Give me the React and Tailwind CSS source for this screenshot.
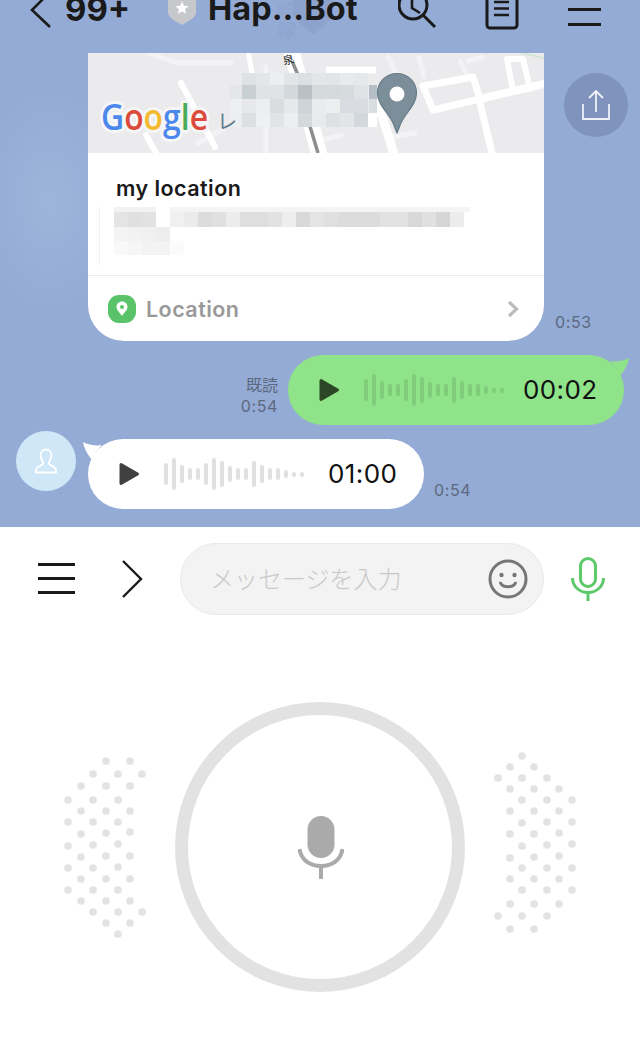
const mapRows = [
  { y: 20, h: 12, cells: [[154,"#dfe2e4"],[168,"#e4e7e9"],[182,"#eceef0"],[196,"#e2e5e7"],[210,"#dde0e3"],[224,"#e4e6e8"],[238,"#e2e5e7"],[252,"#e8eaec"],[266,"#e6e8ea"]] },
  { y: 32, h: 14, cells: [[142,"#e4e6e8"],[154,"#c9d0d4"],[168,"#dfe3e6"],[182,"#dfe3e6"],[196,"#d3d8dc"],[210,"#b9c0c6"],[224,"#d4d9dc"],[238,"#d4d9dc"],[252,"#d6dbde"],[266,"#e0e3e6"],[281,"#b6bfc5",8]] },
  { y: 46, h: 14, cells: [[142,"#eeeff0"],[154,"#e6e8ea"],[168,"#eceef0"],[182,"#d9dde0"],[196,"#e6e8ea"],[210,"#ced4d8"],[224,"#e9ebed"],[238,"#eceef0"],[252,"#d9dde1"],[266,"#d9dde1"],[281,"#d8dde0",8]] },
  { y: 60, h: 14, cells: [[142,"#ebedee"],[154,"#dde0e3"],[168,"#eef0f1"],[182,"#e0e4e6"],[196,"#eceef0"],[210,"#d4d9dc"],[224,"#e8eaec"],[238,"#dde1e4"],[252,"#e2e5e7"],[266,"#d3d8dc"],[280,"#ffffff",9]] },
];
const addrRow = ["#e4e4e4","#e0e0e0","#e2e2e2","#ffffff","#f0f0f0","#ebebeb","#dcdcdc","#e0e0e0","#ececec","#dedede","#dedede","#e2e2e2","#eeeeee","#d8d8d8","#e4e4e4","#e0e0e0","#dcdcdc","#dcdcdc","#dcdcdc","#e2e2e2","#e2e2e2","#d8d8d8","#e0e0e0","#d6d6d6","#ececec"];
const leftDots = [[168,63],[240,63],[129,102],[204,102],[276,102],[93,138],[168,138],[240,138],[54,180],[129,180],[204,180],[93,213],[168,213],[240,213],[54,246],[129,246],[204,246],[93,282],[168,279],[240,276],[54,318],[129,315],[204,312],[93,351],[168,348],[240,348],[54,384],[129,384],[204,381],[93,417],[168,417],[240,417],[54,450],[129,450],[204,450],[93,483],[168,483],[240,483],[129,516],[204,516],[276,516],[168,549],[240,549],[204,582]];
const rightDots = [[126,48],[90,81],[162,81],[54,114],[126,114],[201,114],[90,147],[162,147],[237,147],[126,180],[201,180],[276,180],[90,213],[162,213],[237,213],[126,249],[201,246],[276,246],[90,282],[162,282],[237,279],[126,318],[201,315],[276,312],[90,354],[162,351],[237,348],[126,384],[201,384],[276,384],[90,417],[162,417],[237,417],[126,450],[201,450],[276,450],[90,492],[162,492],[237,492],[54,528],[126,528],[201,528],[90,567],[162,567]];
const wave = [22,32,18,12,12,22,32,26,16,12,12,26,18,12,12,8,5,5];

function Dots({ dots }) {
  return (
    <svg width="110" height="210" viewBox="0 0 330 630" className="mt-[38px] shrink-0">
      {dots.map(([x, y], i) => <circle key={i} cx={x} cy={y} r="11.5" fill="#e3e3e3" />)}
    </svg>
  );
}

function MapPic() {
  return (
    <svg width="456" height="100" viewBox="0 0 456 100" className="block">
      <rect width="456" height="100" fill="#ebebed" />
      <g fill="none" strokeLinecap="round" strokeLinejoin="round">
        <g stroke="#f3f3f5" strokeWidth="5">
          <path d="M60 0L90 10H143" />
          <path d="M300 4L310 24" /><path d="M331 4L336 24" /><path d="M372 8L380 24" /><path d="M380 8L395 4" />
          <path d="M304 84L327 80" /><path d="M234 87L254 82" /><path d="M178 14V100" />
          <path d="M110 90L135 76" />
        </g>
        <g stroke="#ffffff" strokeWidth="6">
          <path d="M93 30L127 94" /><path d="M58 82L68 100" />
        </g>
        <path d="M203 -4L232 104" stroke="#ffffff" strokeWidth="16" strokeLinecap="butt" />
        <path d="M160 -2L164 20" stroke="#ffffff" strokeWidth="5" />
        <path d="M204 8L210 22M221 70L230 100" stroke="#8e8e8e" strokeWidth="3.5" strokeLinecap="butt" />
        <path d="M238 17H288" stroke="#ffffff" strokeWidth="7" strokeLinecap="butt" />
        <path d="M290 50L307 104" stroke="#ffffff" strokeWidth="9" />
        <path d="M335 33L385 24L392 46L345 57Z" stroke="#ffffff" strokeWidth="7" />
        <path d="M392 46L460 30" stroke="#ffffff" strokeWidth="8" />
        <path d="M392 50L405 104" stroke="#ffffff" strokeWidth="7" />
        <path d="M425 38L419 6H435L442 36" stroke="#ffffff" strokeWidth="6" />
        <path d="M434 0L456 5" stroke="#cfe5cf" strokeWidth="1.5" />
      </g>
      <text x="196" y="12" fontSize="11" fill="#222" transform="rotate(-14 196 12)" fontFamily="'Noto Sans CJK JP', sans-serif">泉</text>
      {mapRows.map((r) => r.cells.map(([x, c, w]) => <rect key={x + "-" + r.y} x={x} y={r.y} width={w || 14} height={r.h} fill={c} />))}
      <g fontFamily="'Open Sans', Roboto, sans-serif" fontSize="36" fontWeight="600" stroke="#f6f6f7" strokeWidth="6" paintOrder="stroke" strokeLinejoin="round">
        <text x="13" y="77" textLength="107" lengthAdjust="spacingAndGlyphs">
          <tspan fill="#4b88ec">G</tspan><tspan fill="#dc4a3c">o</tspan><tspan fill="#f3b92f">o</tspan><tspan fill="#4b88ec">g</tspan><tspan fill="#4cab56">l</tspan><tspan fill="#dc4a3c">e</tspan>
        </text>
      </g>
      <text x="129" y="76" fontSize="20" fill="#5e7a8a" fontFamily="'Noto Sans CJK JP', sans-serif">レ</text>
      <path d="M309 20.5C298.2 20.5 289.5 29.2 289.5 40C289.5 52 301 60 305 70C306.8 74 308 78 309 80C310 78 311.2 74 313 70C317 60 328.5 52 328.5 40C328.5 29.2 319.8 20.5 309 20.5Z" fill="#7b8e9a" stroke="#677b87" strokeWidth="1.2" />
      <circle cx="309" cy="41" r="7.5" fill="#ffffff" />
    </svg>
  );
}

function AddressPic() {
  return (
    <svg width="372" height="58" viewBox="0 0 372 58" className="block">
      <rect x="0" y="0" width="1" height="58" fill="#eef0f5" />
      <rect x="15" y="0" width="42" height="5" fill="#f2f2f2" />
      <rect x="71" y="0" width="300" height="5" fill="#f4f4f4" />
      {addrRow.map((c, i) => <rect key={i} x={15 + i * 14} y="5" width="14" height="15" fill={c} />)}
      {["#f4f4f4", "#f2f2f2", "#f0f0f0", "#ededed"].map((c, i) => <rect key={i} x={15 + i * 14} y="20" width="14" height="14" fill={c} />)}
      {["#f9f9f9", "#f6f6f6", "#f3f3f3", "#f3f3f3", "#fbfbfb"].map((c, i) => <rect key={i} x={15 + i * 14} y="34" width="14" height="14" fill={c} />)}
    </svg>
  );
}

function Wave({ color }) {
  return (
    <div className="flex items-center gap-1">
      {wave.map((h, i) => <div key={i} className="w-1 rounded-full" style={{ height: h, backgroundColor: color }} />)}
    </div>
  );
}

function Play({ color }) {
  return (
    <svg width="22" height="24" viewBox="0 0 22 24" className="shrink-0">
      <path d="M3 2.5L19.5 12L3 21.5Z" fill={color} stroke={color} strokeWidth="3" strokeLinejoin="round" />
    </svg>
  );
}

function Time({ children, className = "" }) {
  return <div className={"text-[16px] leading-[20px] tracking-[0.6px] text-[#5c6880] " + className}>{children}</div>;
}

export default function App() {
  return (
    <div className="h-[1061px] w-[640px] overflow-hidden bg-white font-['Inter','Noto_Sans_CJK_JP',sans-serif]">
      <div className="relative h-[527px] overflow-hidden bg-[#94abd5] bg-[radial-gradient(ellipse_70px_110px_at_50px_200px,#9eb4da,transparent)]">
        <div className="absolute left-[274px] top-0 text-[20px] leading-[22px] text-[#8ea5d0] [writing-mode:vertical-rl]">崎線</div>
        <svg width="40" height="36" viewBox="0 0 40 36" className="absolute left-[293px] top-0">
          <path d="M0 0H40V12C40 22 26 28 20 35C14 28 0 22 0 12Z" fill="#8da3ce" />
        </svg>

        <header className="relative flex h-[53px] items-start overflow-hidden text-[#1a1a1a]">
          <svg width="21" height="30" viewBox="0 0 21 30" className="ml-[30px] shrink-0" fill="none" stroke="#1a1a1a" strokeWidth="2.6">
            <path d="M20 -8L2 10L20 27" />
          </svg>
          <div className="ml-[14px] -mt-[11px] w-[103px] text-[33px] font-bold leading-[40px]">99+</div>
          <svg width="28" height="26" viewBox="0 0 28 26" className="shrink-0">
            <path d="M0 -4H28V12C28 18 20 21 14 25C8 21 0 18 0 12Z" fill="#c6c8cc" />
            <path d="M14 1.5L15.9 5.8L20.5 6.2L17 9.2L18.1 13.8L14 11.4L9.9 13.8L11 9.2L7.5 6.2L12.1 5.8Z" fill="#ffffff" />
          </svg>
          <div className="ml-[12px] -mt-[11px] w-[190px] whitespace-nowrap text-[32.5px] font-bold leading-[40px]">Hap...Bot</div>
          <svg width="40" height="36" viewBox="0 0 40 36" className="shrink-0" fill="none" stroke="#1a1a1a" strokeWidth="3">
            <circle cx="15" cy="5" r="14" />
            <path d="M25 15L37 27" />
            <path d="M14 0V8L22 13" strokeWidth="2.6" />
          </svg>
          <svg width="34" height="30" viewBox="0 0 34 30" className="ml-[47px] shrink-0" fill="none" stroke="#1a1a1a">
            <rect x="2" y="-8" width="30" height="36" rx="3" strokeWidth="3" />
            <path d="M9 2H24M9 8.5H24M9 15H24" strokeWidth="2.6" />
          </svg>
          <div className="ml-[49px] mt-2 flex w-[33px] flex-col gap-3">
            <div className="h-[3px] bg-[#1a1a1a]" />
            <div className="h-[3px] bg-[#1a1a1a]" />
          </div>
        </header>

        <div className="absolute left-[564px] top-[73px] flex h-16 w-16 items-center justify-center rounded-full bg-[#7f93bd]">
          <svg width="30" height="32" viewBox="0 0 30 32" fill="none" stroke="#eef2f8" strokeWidth="1.8">
            <path d="M2 15V30H28V15" /><path d="M15 23V2M8 9L15 2L22 9" />
          </svg>
        </div>

        <div className="relative flex items-end pl-[88px]">
          <div className="w-[456px] overflow-hidden rounded-b-[36px] bg-white">
            <MapPic />
            <div className="pl-7 pt-[22px] text-[21.5px] font-semibold leading-[26px] tracking-[0.45px] text-[#1a1a1a]">my location</div>
            <div className="mt-[6px] pl-[11px]"><AddressPic /></div>
            <div className="mt-[10px] flex h-[66px] items-center border-t border-[#ebebeb] pl-5 pr-[25px]">
              <svg width="28" height="28" viewBox="0 0 28 28" className="shrink-0">
                <rect width="28" height="28" rx="11" fill="#5ac36a" />
                <path d="M14 6.5C10.8 6.5 8.5 8.9 8.5 11.8C8.5 15.5 12.8 18.5 14 21C15.2 18.5 19.5 15.5 19.5 11.8C19.5 8.9 17.2 6.5 14 6.5Z" fill="#ffffff" />
                <circle cx="14" cy="12" r="2" fill="#5ac36a" />
              </svg>
              <div className="ml-[10px] flex-1 text-[21.5px] font-semibold leading-[26px] tracking-[0.45px] text-[#999999]">Location</div>
              <svg width="12" height="18" viewBox="0 0 12 18" fill="none" stroke="#bbbbbb" strokeWidth="3.2"><path d="M2 2L9.5 9L2 16" /></svg>
            </div>
          </div>
          <Time className="mb-[9px] ml-[11px]">0:53</Time>
        </div>

        <div className="relative mt-[14px] flex items-end justify-end pr-4">
          <div className="mb-[9px] mr-[10px] flex flex-col items-end">
            <div className="text-[16px] leading-[22px] text-[#5c6880]">既読</div>
            <Time>0:54</Time>
          </div>
          <div className="relative flex h-[70px] w-[336px] items-center rounded-full bg-[#8fe388] pl-[30px]">
            <svg width="20" height="22" viewBox="0 0 20 22" className="absolute -right-[6px] top-[1px]">
              <path d="M0 5C6 6 14 5 19 2C18 8 15 14 10 20C8 14 4 9 0 5Z" fill="#8fe388" />
            </svg>
            <Play color="#2b4726" />
            <div className="ml-[24px]"><Wave color="#80cc7a" /></div>
            <div className="ml-[19px] text-[26px] leading-8 tracking-[0.4px] text-[#111111]">00:02</div>
          </div>
        </div>

        <div className="relative mt-[14px] flex items-start pl-4">
          <div className="-mt-2 flex h-[60px] w-[60px] shrink-0 items-center justify-center rounded-full bg-[#cfe7f7]">
            <svg width="24" height="26" viewBox="0 0 24 26" fill="none" stroke="#ffffff" strokeWidth="1.8" strokeLinejoin="round">
              <path d="M12 1.5C8.5 1.5 6.5 4.3 6.5 7.5C6.5 10.5 8 12.6 9 14V16C7 18 2 19 2 22V24.5H22V22C22 19 17 18 15 16V14C16 12.6 17.5 10.5 17.5 7.5C17.5 4.3 15.5 1.5 12 1.5Z" />
            </svg>
          </div>
          <div className="relative ml-3 flex h-[70px] w-[336px] items-center rounded-full bg-white pl-[30px]">
            <svg width="20" height="22" viewBox="0 0 20 22" className="absolute -left-[6px] top-[1px]">
              <path d="M20 5C14 6 6 5 1 2C2 8 5 14 10 20C12 14 16 9 20 5Z" fill="#ffffff" />
            </svg>
            <Play color="#404040" />
            <div className="ml-[24px]"><Wave color="#e0e0e0" /></div>
            <div className="ml-[24px] text-[26px] leading-8 tracking-[0.4px] text-[#111111]">01:00</div>
          </div>
          <Time className="ml-[10px] mt-[41px]">0:54</Time>
        </div>
      </div>

      <div className="flex items-center pl-[38px] pt-4">
        <div className="-mt-[2px] flex w-[37px] flex-col gap-[11px]">
          <div className="h-[3px] bg-[#1a1a1a]" />
          <div className="h-[3px] bg-[#1a1a1a]" />
          <div className="h-[3px] bg-[#1a1a1a]" />
        </div>
        <svg width="22" height="38" viewBox="0 0 22 38" className="ml-[46px] shrink-0" fill="none" stroke="#1a1a1a" strokeWidth="2.4">
          <path d="M2 1L20 19L2 37" />
        </svg>
        <div className="ml-[37px] flex h-[72px] w-[364px] items-center justify-between rounded-full border border-[#e9e9e9] bg-[#f3f3f3] pl-[29px] pr-[15px]">
          <div className="mb-[2px] font-['Noto_Sans_CJK_JP',sans-serif] text-[24px] font-light leading-8 text-[#c8c8c8]">メッセージを入力</div>
          <svg width="40" height="40" viewBox="0 0 40 40" fill="none" className="shrink-0">
            <circle cx="20" cy="20" r="18" stroke="#777777" strokeWidth="3" />
            <circle cx="13.5" cy="16" r="2.2" fill="#777777" /><circle cx="26.5" cy="16" r="2.2" fill="#777777" />
            <path d="M12.5 24C15 29 25 29 27.5 24" stroke="#777777" strokeWidth="2.8" strokeLinecap="round" />
          </svg>
        </div>
        <svg width="34" height="44" viewBox="0 0 34 44" className="ml-[27px] shrink-0" fill="none" stroke="#5cc96a" strokeWidth="3">
          <rect x="9.5" y="1.5" width="15" height="28" rx="7.5" />
          <path d="M1.5 21C1.5 29 8 35.5 17 35.5C26 35.5 32.5 29 32.5 21M17 35.5V44" />
        </svg>
      </div>

      <div className="mt-[87px] flex items-start gap-[15px] pl-[50px]">
        <Dots dots={leftDots} />
        <div className="flex h-[290px] w-[290px] shrink-0 items-center justify-center rounded-full border-[13px] border-[#e2e2e2]">
          <svg width="46" height="63" viewBox="0 0 46 63" className="ml-[2px]" fill="none">
            <rect x="9.5" y="0" width="27" height="42" rx="13.5" fill="#aaaaaa" />
            <path d="M1.5 33C3 44 12 50 23 50C34 50 43 44 44.5 33M23 50V63" stroke="#aaaaaa" strokeWidth="4" />
          </svg>
        </div>
        <Dots dots={rightDots} />
      </div>
    </div>
  );
}
